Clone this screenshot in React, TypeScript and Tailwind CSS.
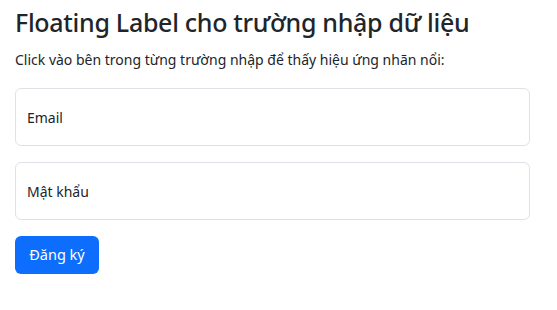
export default function App() {
  return (
    <div className="min-h-screen bg-white px-[15px] pt-1 text-[#212529]" style={{ fontFamily: '"Noto Sans", "Open Sans", sans-serif' }}>
      <h1 className="mb-2 text-[25px] font-medium leading-[36px] tracking-[-0.3px]">Floating Label cho trường nhập dữ liệu</h1>
      <p className="mb-4 text-[14px] leading-6">Click vào bên trong từng trường nhập để thấy hiệu ứng nhãn nổi:</p>

      <form className="w-[515px]" onSubmit={(e) => e.preventDefault()}>
        {/* Email */}
        <div className="relative mb-4">
          <input
            id="email"
            type="email"
            placeholder=" "
            className="peer block h-[58px] w-full rounded-md border border-[#dee2e6] bg-white px-3 pt-[26px] pb-[6px] text-sm outline-none focus:border-[#86b7fe] focus:shadow-[0_0_0_4px_rgba(13,110,253,0.25)]"
          />
          <label
            htmlFor="email"
            className="pointer-events-none absolute left-0 top-0 flex h-full items-center px-3 text-[14px] text-[#212529] transition-all peer-focus:h-auto peer-focus:pt-2 peer-focus:text-xs peer-focus:text-[#6c757d] peer-[:not(:placeholder-shown)]:h-auto peer-[:not(:placeholder-shown)]:pt-2 peer-[:not(:placeholder-shown)]:text-xs"
          >
            Email
          </label>
        </div>

        {/* Mật khẩu */}
        <div className="relative mb-4">
          <input
            id="password"
            type="password"
            placeholder=" "
            className="peer block h-[58px] w-full rounded-md border border-[#dee2e6] bg-white px-3 pt-[26px] pb-[6px] text-sm outline-none focus:border-[#86b7fe] focus:shadow-[0_0_0_4px_rgba(13,110,253,0.25)]"
          />
          <label
            htmlFor="password"
            className="pointer-events-none absolute left-0 top-0 flex h-full items-center px-3 text-[14px] text-[#212529] transition-all peer-focus:h-auto peer-focus:pt-2 peer-focus:text-xs peer-focus:text-[#6c757d] peer-[:not(:placeholder-shown)]:h-auto peer-[:not(:placeholder-shown)]:pt-2 peer-[:not(:placeholder-shown)]:text-xs"
          >
            Mật khẩu
          </label>
        </div>

        <button type="submit" className="h-[38px] w-[84px] rounded-md bg-[#0d6efd] text-[14.5px] text-white hover:bg-[#0b5ed7]">
          Đăng ký
        </button>
      </form>
    </div>
  )
}
